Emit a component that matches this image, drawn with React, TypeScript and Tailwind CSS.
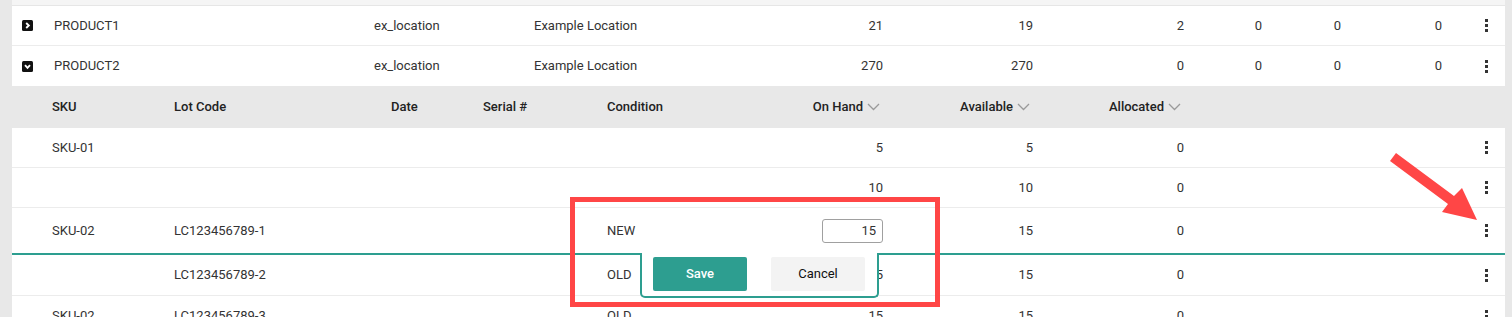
const TEAL = 'bg-[#2d9e90]'

type ProductRow = {
  name: string
  open: boolean
  vals: string[]
}

type SkuRow = {
  sku: string
  lot: string
  cond: string
  onHand: string
  available: string
  allocated: string
}

const products: ProductRow[] = [
  { name: 'PRODUCT1', open: false, vals: ['21', '19', '2', '0', '0', '0'] },
  { name: 'PRODUCT2', open: true, vals: ['270', '270', '0', '0', '0', '0'] },
]

const skuRows: SkuRow[] = [
  { sku: 'SKU-01', lot: '', cond: '', onHand: '5', available: '5', allocated: '0' },
  { sku: '', lot: '', cond: '', onHand: '10', available: '10', allocated: '0' },
]

const afterRows: SkuRow[] = [
  { sku: '', lot: 'LC123456789-2', cond: 'OLD', onHand: '15', available: '15', allocated: '0' },
  { sku: 'SKU-02', lot: 'LC123456789-3', cond: 'OLD', onHand: '15', available: '15', allocated: '0' },
]

// 縦三点メニュー
function Kebab() {
  return (
    <div className="w-[63px] pl-[43px] flex">
      <div className="flex flex-col gap-[2px]">
        <span className="block w-[3px] h-[3px] bg-[#333]" />
        <span className="block w-[3px] h-[3px] bg-[#333]" />
        <span className="block w-[3px] h-[3px] bg-[#333]" />
      </div>
    </div>
  )
}

function ToggleIcon({ open }: { open: boolean }) {
  return (
    <svg width="11" height="11" viewBox="0 0 11 11">
      <rect width="11" height="11" rx="1.5" fill="#111" />
      {open ? (
        <path d="M3 4.2 L5.5 6.8 L8 4.2" stroke="#fff" strokeWidth="1.9" fill="none" />
      ) : (
        <path d="M4.2 3 L6.8 5.5 L4.2 8" stroke="#fff" strokeWidth="1.9" fill="none" />
      )}
    </svg>
  )
}

function SortChevron() {
  return (
    <svg width="13" height="8" viewBox="0 0 13 8">
      <path d="M1 1 L6.5 6.5 L12 1" stroke="#9a9a9a" strokeWidth="1.3" fill="none" />
    </svg>
  )
}

function SkuCells({ row }: { row: SkuRow }) {
  return (
    <>
      <div className="w-[40px]" />
      <div className="w-[122px]">{row.sku}</div>
      <div className="w-[217px]">{row.lot}</div>
      <div className="w-[92px]" />
      <div className="w-[124px]" />
      <div className="w-[136px]">{row.cond}</div>
      <div className="w-[140px] text-right">{row.onHand}</div>
      <div className="w-[150px] text-right">{row.available}</div>
      <div className="w-[151px] text-right">{row.allocated}</div>
      <div className="flex-1" />
      <Kebab />
    </>
  )
}

export default function App() {
  return (
    <div className="relative w-[1512px] h-[317px] overflow-hidden bg-[#e8e8e8] text-[13px] text-[#333] font-['Roboto','Liberation_Sans',sans-serif]">
      <div className="ml-[12px] mr-[7px] flex flex-col">
        {/* 上の行の切れ端 */}
        <div className="h-[6px] bg-[#f5f5f5] border-b border-[#e6e6e6]" />

        {/* 商品行 */}
        {products.map((p, i) => (
          <div
            key={p.name}
            className={`h-[40px] bg-white flex items-center ${i === 0 ? 'border-b border-[#ececec]' : ''}`}
          >
            <div className="w-[42px] pl-[10px] flex items-center">
              <ToggleIcon open={p.open} />
            </div>
            <div className="w-[320px]">{p.name}</div>
            <div className="w-[160px]">ex_location</div>
            <div className="w-[209px]">Example Location</div>
            <div className="w-[140px] text-right">{p.vals[0]}</div>
            <div className="w-[150px] text-right">{p.vals[1]}</div>
            <div className="w-[151px] text-right">{p.vals[2]}</div>
            <div className="w-[78px] text-right">{p.vals[3]}</div>
            <div className="w-[79px] text-right">{p.vals[4]}</div>
            <div className="w-[101px] text-right">{p.vals[5]}</div>
            <Kebab />
          </div>
        ))}

        {/* SKUヘッダー */}
        <div className="h-[42px] flex items-center font-medium text-[#222]">
          <div className="w-[40px]" />
          <div className="w-[122px]">SKU</div>
          <div className="w-[217px]">Lot Code</div>
          <div className="w-[92px]">Date</div>
          <div className="w-[124px]">Serial #</div>
          <div className="w-[136px]">Condition</div>
          <div className="w-[140px] flex justify-end items-center gap-[4px] pr-[3px]">
            On Hand <SortChevron />
          </div>
          <div className="w-[150px] flex justify-end items-center gap-[4px] pr-[3px]">
            Available <SortChevron />
          </div>
          <div className="w-[151px] flex justify-end items-center gap-[4px] pr-[3px]">
            Allocated <SortChevron />
          </div>
        </div>

        {skuRows.map((r, i) => (
          <div key={i} className="h-[40px] bg-white border-b border-[#ececec] flex items-center">
            <SkuCells row={r} />
          </div>
        ))}

        {/* 編集中の行 */}
        <div className="relative h-[47px] bg-white border-b-2 border-[#2d9e90] flex items-center">
          <div className="w-[40px]" />
          <div className="w-[122px]">SKU-02</div>
          <div className="w-[217px]">LC123456789-1</div>
          <div className="w-[92px]" />
          <div className="w-[124px]" />
          <div className="w-[136px]">NEW</div>
          <div className="w-[140px] flex justify-end">
            <input
              defaultValue="15"
              className="w-[61px] h-[24px] border border-[#a0a0a0] rounded-[3px] text-right pr-[6px] outline-none"
            />
          </div>
          <div className="w-[150px] text-right">15</div>
          <div className="w-[151px] text-right">0</div>
          <div className="flex-1" />
          <Kebab />

          {/* 保存ポップアップ */}
          <div className="absolute left-[628px] top-full z-10 w-[239px] h-[45px] bg-white border-2 border-t-0 border-[#2d9e90] rounded-b-[5px] flex items-start gap-[24px] pt-[4px] pl-[11px]">
            <button type="button" className={`w-[94px] h-[34px] rounded-[2px] ${TEAL} text-white font-medium`}>
              Save
            </button>
            <button type="button" className="w-[94px] h-[34px] rounded-[2px] bg-[#f3f3f3] text-[#111]">
              Cancel
            </button>
          </div>
        </div>

        {afterRows.map((r, i) => (
          <div key={i} className="h-[41px] bg-white border-b border-[#ececec] flex items-center">
            <SkuCells row={r} />
          </div>
        ))}
      </div>

      {/* 注釈（赤枠と矢印） */}
      <div className="absolute left-[570px] top-[197px] w-[370px] h-[110px] border-[5px] border-[#ff4646] z-20" />
      <svg className="absolute left-0 top-0 z-20" width="1512" height="317" viewBox="0 0 1512 317">
        <polygon
          points="1396,153 1454,196 1462,188 1477,220 1442,212 1448,204 1390,161"
          fill="#ff4646"
        />
      </svg>
    </div>
  )
}
